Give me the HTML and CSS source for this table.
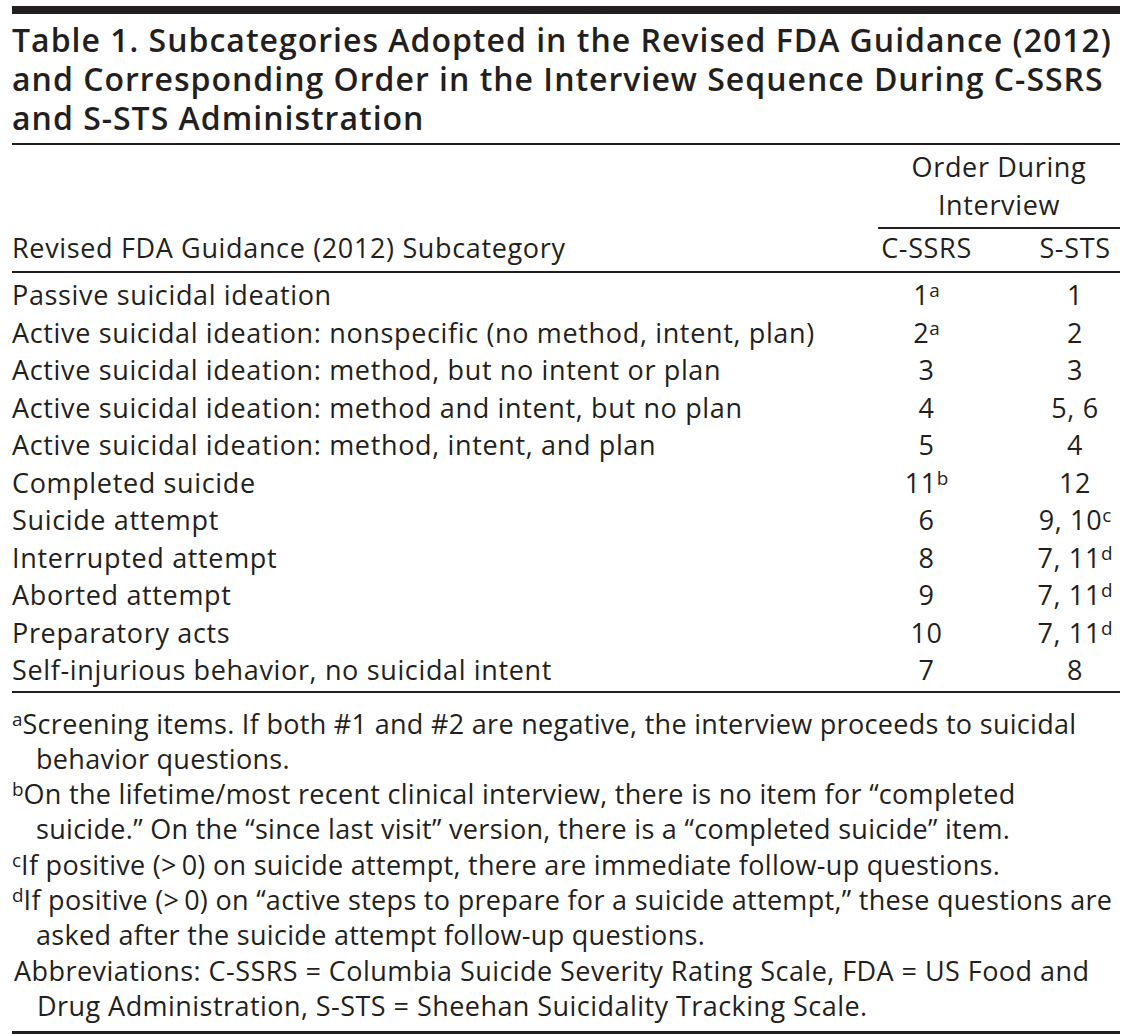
FILE: index.html
```html
<!DOCTYPE html>
<html lang="en">
<head>
<meta charset="utf-8">
<title>Table 1</title>
<link rel="stylesheet" href="styles.css">
</head>
<body>
<div class="page">
  <div class="topbar"></div>
  <h1 class="title">Table 1. Subcategories Adopted in the Revised FDA Guidance (2012)<br>and Corresponding Order in the Interview Sequence During C-SSRS<br>and S-STS Administration</h1>
  <table class="data">
    <colgroup><col class="c1"><col class="c2"><col class="c3"></colgroup>
    <thead>
      <tr class="hr1">
        <th class="sub" rowspan="2">Revised FDA Guidance (2012) Subcategory</th>
        <th class="group" colspan="2">Order During<br>Interview</th>
      </tr>
      <tr class="hr2">
        <th class="n2">C-SSRS</th>
        <th class="n3">S-STS</th>
      </tr>
    </thead>
    <tbody>
      <tr><td>Passive suicidal ideation</td><td class="n2">1<sup>a</sup></td><td class="n3">1</td></tr>
      <tr><td>Active suicidal ideation: nonspecific (no method, intent, plan)</td><td class="n2">2<sup>a</sup></td><td class="n3">2</td></tr>
      <tr><td>Active suicidal ideation: method, but no intent or plan</td><td class="n2">3</td><td class="n3">3</td></tr>
      <tr><td>Active suicidal ideation: method and intent, but no plan</td><td class="n2">4</td><td class="n3">5, 6</td></tr>
      <tr><td>Active suicidal ideation: method, intent, and plan</td><td class="n2">5</td><td class="n3">4</td></tr>
      <tr><td>Completed suicide</td><td class="n2">11<sup>b</sup></td><td class="n3">12</td></tr>
      <tr><td>Suicide attempt</td><td class="n2">6</td><td class="n3">9, 10<sup>c</sup></td></tr>
      <tr><td>Interrupted attempt</td><td class="n2">8</td><td class="n3">7, 11<sup>d</sup></td></tr>
      <tr><td>Aborted attempt</td><td class="n2">9</td><td class="n3">7, 11<sup>d</sup></td></tr>
      <tr><td>Preparatory acts</td><td class="n2">10</td><td class="n3">7, 11<sup>d</sup></td></tr>
      <tr><td>Self-injurious behavior, no suicidal intent</td><td class="n2">7</td><td class="n3">8</td></tr>
    </tbody>
  </table>
  <div class="notes">
    <p class="note"><sup>a</sup>Screening items. If both #1 and #2 are negative, the interview proceeds to suicidal<br>behavior questions.</p>
    <p class="note"><sup>b</sup>On the lifetime/most recent clinical interview, there is no item for “completed<br>suicide.” On the “since last visit” version, there is a “completed suicide” item.</p>
    <p class="note"><sup>c</sup>If positive (&gt;&thinsp;0) on suicide attempt, there are immediate follow-up questions.</p>
    <p class="note"><sup>d</sup>If positive (&gt;&thinsp;0) on “active steps to prepare for a suicide attempt,” these questions are<br>asked after the suicide attempt follow-up questions.</p>
    <p class="note abbr">Abbreviations: C-SSRS = Columbia Suicide Severity Rating Scale, FDA = US Food and<br>Drug Administration, S-STS = Sheehan Suicidality Tracking Scale.</p>
  </div>
</div>
</body>
</html>
```

FILE: styles.css
```css
html, body {
  margin: 0;
  padding: 0;
  background: #ffffff;
}
body {
  color: #231f20;
  font-family: "Open Sans", "Noto Sans", sans-serif;
  font-size: 27px;
}
.page {
  width: 1108px;
  margin-left: 12px;
  padding-top: 6px;
}
.topbar {
  height: 8px;
  background: #231f20;
}
.title {
  margin: 6px 0 0;
  padding-bottom: 6px;
  font-size: 32px;
  font-weight: 600;
  line-height: 39px;
  letter-spacing: 1px;
  white-space: nowrap;
  border-bottom: 2px solid #231f20;
}
.data {
  width: 1108px;
  border-collapse: collapse;
  table-layout: fixed;
  border-bottom: 2px solid #231f20;
}
.c1 { width: 866px; }
.c2 { width: 97px; }
.c3 { width: 145px; }
.data th, .data td {
  padding: 0;
  font-weight: 400;
  text-align: left;
  white-space: nowrap;
  line-height: 37.5px;
  letter-spacing: 0.65px;
}
.data th.sub {
  vertical-align: bottom;
  padding-bottom: 4px;
  border-bottom: 2px solid #231f20;
  line-height: 38px;
}
.data th.group {
  text-align: center;
  line-height: 38px;
  padding: 3px 0 3px;
  border-bottom: 2px solid #231f20;
}
.hr2 th {
  line-height: 38px;
  padding-bottom: 4px;
  border-bottom: 2px solid #231f20;
}
.data .n2 { text-align: center; }
.data .n3 { text-align: center; padding-left: 55px; }
tbody tr:first-child td { padding-top: 3px; }
tbody tr:last-child td { padding-bottom: 2px; }
sup {
  font-size: 0.7em;
  line-height: 0;
  vertical-align: 0.45em;
  letter-spacing: 0;
}
.notes {
  padding: 13px 0 8px;
  border-bottom: 3px solid #231f20;
}
.note {
  margin: 0;
  padding-left: 24px;
  text-indent: -24px;
  line-height: 35.3px;
  font-size: 27px;
  letter-spacing: 0.3px;
  white-space: nowrap;
}
.note.abbr {
  padding-left: 25px;
  text-indent: -23px;
  letter-spacing: 0.45px;
}
```
